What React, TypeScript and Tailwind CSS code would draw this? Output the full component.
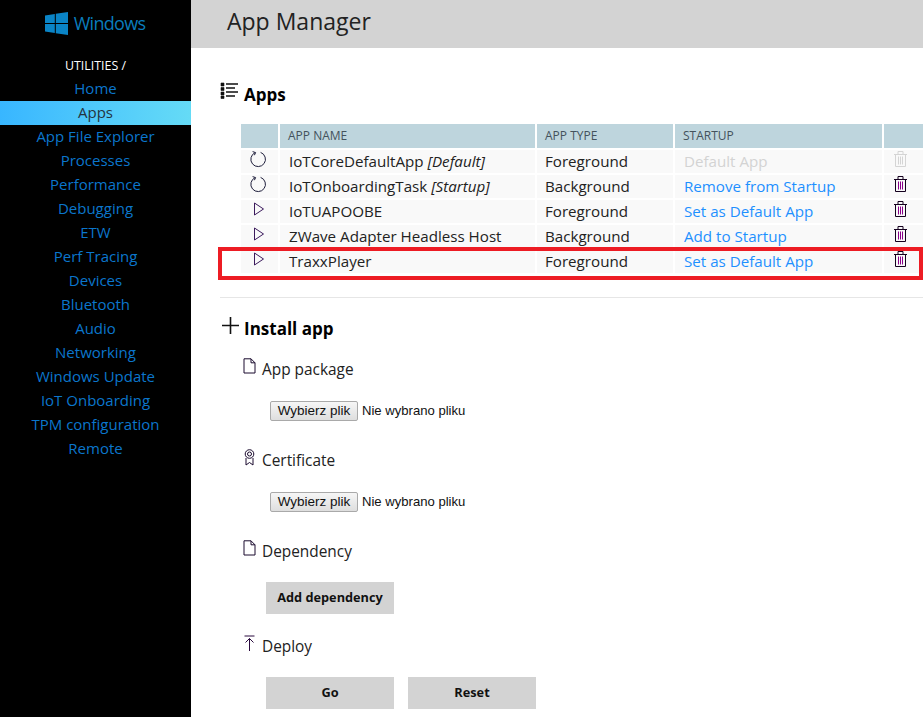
import React from 'react';

const navItems = [
  'Home', 'Apps', 'App File Explorer', 'Processes', 'Performance', 'Debugging', 'ETW', 'Perf Tracing',
  'Devices', 'Bluetooth', 'Audio', 'Networking', 'Windows Update', 'IoT Onboarding', 'TPM configuration', 'Remote',
];

const apps = [
  { name: 'IoTCoreDefaultApp', tag: '[Default]', type: 'Foreground', startup: 'Default App', running: true, disabled: true },
  { name: 'IoTOnboardingTask', tag: '[Startup]', type: 'Background', startup: 'Remove from Startup', running: true },
  { name: 'IoTUAPOOBE', type: 'Foreground', startup: 'Set as Default App' },
  { name: 'ZWave Adapter Headless Host', type: 'Background', startup: 'Add to Startup' },
  { name: 'TraxxPlayer', type: 'Foreground', startup: 'Set as Default App' },
];

const RefreshIcon = () => (
  <svg width="18" height="18" viewBox="0 0 18 18" fill="none" stroke="#1d1d3a" strokeWidth="1">
    <path d="M6.2 2.6 A7.3 7.3 0 1 0 11.6 2.4" />
    <path d="M3.6 1.6 L6.6 2.6 L5.4 5.2" />
  </svg>
);

const PlayIcon = () => (
  <svg width="12" height="14" viewBox="0 0 12 14" fill="none" stroke="#3b1a5c" strokeWidth="1">
    <path d="M1.5 1 L10.5 7 L1.5 13 Z" />
  </svg>
);

const TrashIcon = ({ disabled }: { disabled?: boolean }) => (
  <svg width="13" height="16" viewBox="0 0 13 16" fill="none" stroke={disabled ? '#d4d4d4' : '#14001e'} strokeWidth="1">
    <path d="M0 3.5 H13" />
    <path d="M4 3.5 V0.5 H9 V3.5" />
    <path d="M1.5 3.5 V15.5 H11.5 V3.5" />
    <path d="M4.5 5.5 V13.5 M6.5 5.5 V13.5 M8.5 5.5 V13.5" stroke={disabled ? '#d4d4d4' : '#8a008a'} />
  </svg>
);

const DocIcon = () => (
  <svg width="13" height="16" viewBox="0 0 13 16" fill="none" stroke="#1a0a2e" strokeWidth="1">
    <path d="M1 0.8 H8 L12 4.8 V15 H1 Z" />
    <path d="M8 0.8 V4.8 H12" />
  </svg>
);

const FileChooser = () => (
  <div className="flex items-center ml-[79px] font-['Liberation_Sans',sans-serif] text-[#111]">
    <button className="w-[88px] h-[20px] border border-[#a9a9a9] rounded-[2px] bg-gradient-to-b from-[#f6f6f6] to-[#dedede] text-[13.5px] leading-none">
      Wybierz plik
    </button>
    <span className="ml-1 text-[13.1px]">Nie wybrano pliku</span>
  </div>
);

const GrayButton = ({ label }: { label: string }) => (
  <button className="w-[128px] h-[32px] bg-[#d3d3d3] text-[12.75px] font-bold text-[#111]">{label}</button>
);

const SubHeading = ({ icon, label }: { icon: React.ReactNode; label: string }) => (
  <div className="flex items-center h-[24px] ml-[52px] text-[15.4px] text-[#222]">
    <span className="w-[19px] flex justify-start -mt-[8px]">{icon}</span>
    {label}
  </div>
);

export default function App() {
  return (
    <div className="flex w-[923px] h-[717px] overflow-hidden bg-white font-['Open_Sans',sans-serif]">
      {/* SIDEBAR */}
      <div className="w-[191px] shrink-0 bg-black text-center">
        <div className="flex items-center justify-center gap-[6px] h-[48px] pr-[1px]">
          <svg width="23" height="23" viewBox="0 0 23 23" fill="#0a84c6" className="-mt-[2px]">
            <path d="M0 3.4 L9.8 2 V11 H0 Z" />
            <path d="M10.8 1.8 L23 0 V11 H10.8 Z" />
            <path d="M0 12 H9.8 V21 L0 19.6 Z" />
            <path d="M10.8 12 H23 V23 L10.8 21.2 Z" />
          </svg>
          <span className="text-[18px] leading-none tracking-[-0.7px] text-[#0a7cbc] -mt-[2px]">Windows</span>
        </div>
        <div className="h-[29px] pt-[9px] text-[12.4px] leading-[18px] text-white">UTILITIES /</div>
        <div>
          {navItems.map((item) => (
            <div
              key={item}
              className={`h-[24px] text-[15px] leading-[23px] ${
                item === 'Apps' ? 'bg-gradient-to-r from-[#38b6ff] to-[#65dbf6] text-[#24343f]' : 'text-[#0b76cc]'
              }`}
            >
              {item}
            </div>
          ))}
        </div>
      </div>

      {/* MAIN */}
      <div className="flex-1 min-w-0 relative">
        <div className="h-[48px] bg-[#d3d3d3] pl-[36px] text-[23px] leading-[42px] text-[#222]">App Manager</div>

        <div className="flex items-center h-[32px] mt-[31px] ml-[29px]">
          <svg width="19" height="18" viewBox="0 0 19 18" fill="none" stroke="#111" strokeWidth="1.3" className="-mt-[8px]">
            <path d="M6 2 H18 M6 6 H15 M6 10 H18 M6 14 H15" />
            <path d="M1 1 H4 V4 H1 Z M1 5.5 H4 V8.5 H1 Z M1 10 H4 V13 H1 Z M1 14 H4 V16.5 H1 Z" fill="#111" strokeWidth="0.6" />
          </svg>
          <span className="ml-[5px] text-[17px] font-bold text-black">Apps</span>
        </div>

        {/* APP TABLE */}
        <div className="mt-[13px] ml-[50px] flex flex-col gap-[2px] text-[15.15px] text-[#222]">
          <div className="flex gap-[2px] h-[24px] text-[12px] leading-[24px] text-[#44525c]">
            <div className="w-[37px] bg-[#bed5dd]" />
            <div className="w-[255px] bg-[#bed5dd] pl-[8px]">APP NAME</div>
            <div className="w-[136px] bg-[#bed5dd] pl-[8px]">APP TYPE</div>
            <div className="w-[207px] bg-[#bed5dd] pl-[8px]">STARTUP</div>
            <div className="flex-1 bg-[#bed5dd]" />
          </div>
          {apps.map((app) => (
            <div key={app.name} className="flex gap-[2px] h-[23px] leading-[23px]">
              <div className={`w-[37px] bg-[#f9f9f9] flex justify-center ${app.running ? 'pr-[3px]' : 'pr-[1px] pt-[2px]'}`}>
                {app.running ? <RefreshIcon /> : <PlayIcon />}
              </div>
              <div className="w-[255px] bg-[#f9f9f9] pl-[9px] whitespace-nowrap">
                {app.name} {app.tag && <i>{app.tag}</i>}
              </div>
              <div className="w-[136px] bg-[#f9f9f9] pl-[8px]">{app.type}</div>
              <div className={`w-[207px] bg-[#f9f9f9] pl-[9px] ${app.disabled ? 'text-[#d3d3d3]' : 'text-[#1e90ff]'}`}>
                {app.startup}
              </div>
              <div className="flex-1 bg-[#f9f9f9] flex justify-center pr-[6px] pt-[1px]">
                <TrashIcon disabled={app.disabled} />
              </div>
            </div>
          ))}
        </div>

        {/* highlight round the last row */}
        <div className="absolute left-[27px] top-[247px] w-[705px] h-[33px] border-[4px] border-[#ed1c24]" />

        <div className="mt-[24px] ml-[29px] border-t border-[#e6e6e6]" />

        {/* INSTALL */}
        <div className="flex items-center h-[32px] mt-[15px] ml-[30px]">
          <svg width="19" height="19" viewBox="0 0 19 19" stroke="#111" strokeWidth="1.6" className="-mt-[8px]">
            <path d="M9.5 1 V18 M1 9.5 H18" />
          </svg>
          <span className="ml-[4px] text-[17px] font-bold text-black">Install app</span>
        </div>

        <div className="mt-[13px]"><SubHeading icon={<DocIcon />} label="App package" /></div>
        <div className="mt-[19px]"><FileChooser /></div>

        <div className="mt-[28px]">
          <SubHeading
            label="Certificate"
            icon={
              <svg width="13" height="17" viewBox="0 0 13 17" fill="none" stroke="#1a0a2e" strokeWidth="1">
                <circle cx="6.5" cy="5" r="4.3" />
                <circle cx="6.5" cy="5" r="2" />
                <path d="M3 9 V16 L6.5 13.5 L10 16 V9" />
              </svg>
            }
          />
        </div>
        <div className="mt-[19px]"><FileChooser /></div>

        <div className="mt-[28px]"><SubHeading icon={<DocIcon />} label="Dependency" /></div>
        <div className="mt-[18px] ml-[75px]"><GrayButton label="Add dependency" /></div>

        <div className="mt-[21px]">
          <SubHeading
            label="Deploy"
            icon={
              <svg width="13" height="17" viewBox="0 0 13 17" fill="none" stroke="#2a0a3e" strokeWidth="1">
                <path d="M1.5 1 H11.5 M6.5 16 V3.5 M2.5 7.5 L6.5 3.5 L10.5 7.5" />
              </svg>
            }
          />
        </div>
        <div className="mt-[18px] ml-[75px] flex gap-[14px]">
          <GrayButton label="Go" />
          <GrayButton label="Reset" />
        </div>
      </div>
    </div>
  );
}
